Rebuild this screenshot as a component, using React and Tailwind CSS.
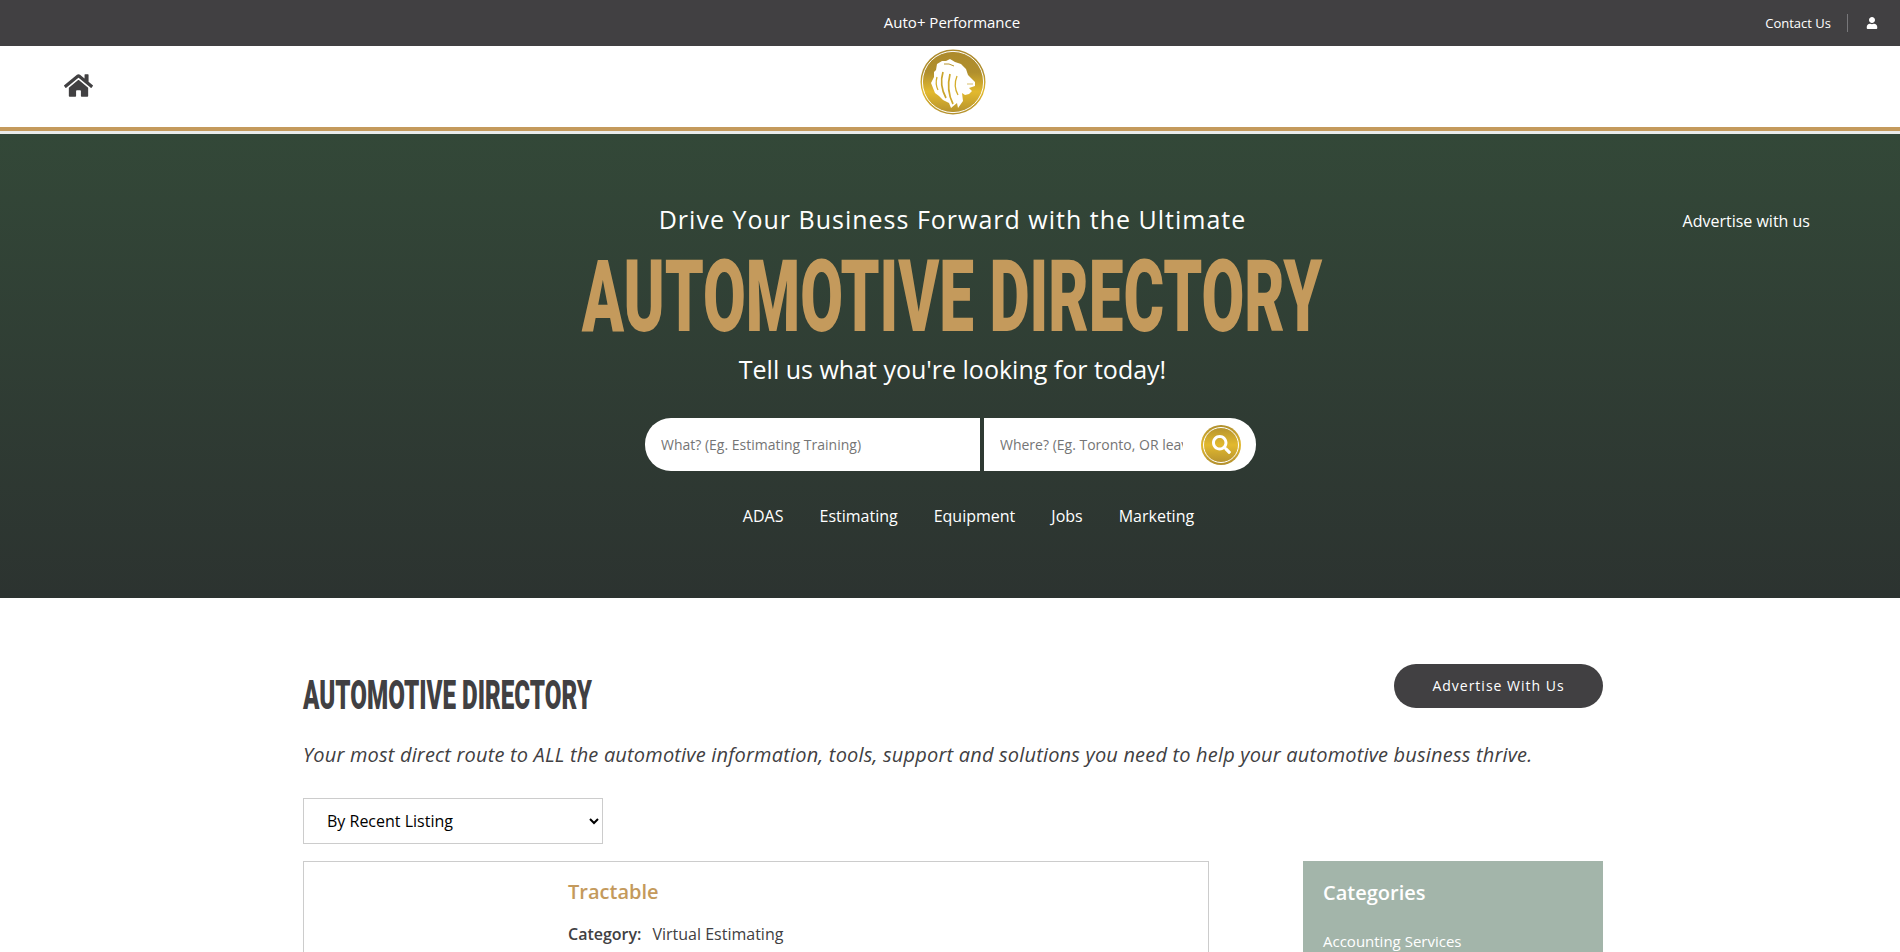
import { FaHome, FaUser, FaSearch } from 'react-icons/fa';

const LionMark = () => (
    <svg viewBox="0 0 66 66" className="w-full h-full">
        <defs>
            <linearGradient id="logo-gold" x1="0" y1="0" x2="0" y2="1">
                <stop offset="0" stopColor="#ad8a2c" />
                <stop offset="0.35" stopColor="#b08f2d" />
                <stop offset="0.65" stopColor="#e2b92e" />
                <stop offset="1" stopColor="#b28f2e" />
            </linearGradient>
        </defs>
        <circle cx="33" cy="33" r="32.5" fill="url(#logo-gold)" />
        <circle cx="33" cy="33" r="30.6" fill="none" stroke="#fff" strokeWidth="1" />
        <path
            d="M17 15 L22 12 L26 12 L30 10 L35 13 L41 15 L46 20 L48 26 L55 33 L55 37 L49 39 L52 42 L49 45 L45 46 L42 44 L43 52 L38 59 L37 54 L31 59 L29 54 L23 51 L19 47 L15 44 L11 34 L14 28 L14 23 L16 21 Z"
            fill="#fff"
        />
        <path d="M23 23 Q19 36 26 49" fill="none" stroke="#c9a42c" strokeWidth="1.7" />
        <path d="M30 25 Q26 41 33 55" fill="none" stroke="#cfa92c" strokeWidth="1.7" />
        <path d="M17 28 Q15 35 18 41" fill="none" stroke="#d4ad2c" strokeWidth="1.3" />
        <path d="M37 27 Q33 37 38 46" fill="none" stroke="#d4ad2c" strokeWidth="1.3" />
        <path d="M24 15 Q29 14 34 17" fill="none" stroke="#b8952c" strokeWidth="1" />
        <path d="M47 35 L53 35" fill="none" stroke="#c9a42c" strokeWidth="0.7" />
    </svg>
);

// Gold search button in the location field
const SearchButton = () => (
    <button
        type="button"
        className="flex h-[40px] w-[40px] items-center justify-center rounded-full bg-gradient-to-b from-[#b08f2d] via-[#e2b92e] to-[#b28f2e] text-white outline outline-1 -outline-offset-[3px] outline-white"
    >
        <FaSearch size={19} />
    </button>
);

const quickLinks = ['ADAS', 'Estimating', 'Equipment', 'Jobs', 'Marketing'];

export default function App() {
    return (
        <div className="h-screen overflow-hidden bg-white text-[#414042] font-['Open_Sans',sans-serif]">
            {/* Top bar */}
            <div className="relative flex h-[46px] items-center justify-center bg-[#414042] text-white">
                <span className="mb-[2px] pl-[4px] text-[15px]">Auto+ Performance</span>
                <div className="absolute right-[22px] top-0 flex h-[46px] items-center">
                    <a className="mt-[2px] text-[13px]">Contact Us</a>
                    <span className="ml-[16px] mr-[18px] h-[18px] w-px bg-[#77777a]" />
                    <FaUser size={12} />
                </div>
            </div>

            {/* Header */}
            <header className="relative flex h-[81px] items-center justify-center bg-white">
                <FaHome size={29} className="absolute left-[64px] top-[25px] text-[#414042]" />
                <div className="mb-[9px] ml-[5px] h-[66px] w-[66px]">
                    <LionMark />
                </div>
            </header>
            <div className="h-[4px] bg-[#c49a5c]" />
            <div className="h-[3px] bg-[#e9ecea]" />

            {/* Hero */}
            <section className="relative flex h-[464px] flex-col items-center bg-gradient-to-b from-[#334838] to-[#2c3330] pl-[5px] text-white">
                <a className="absolute right-[90px] top-[75px] text-[16px]">Advertise with us</a>
                <p className="mt-[69px] text-[25px] leading-[33px] tracking-[1px]">Drive Your Business Forward with the Ultimate</p>
                <h1 className="mt-[10px] flex h-[101px] items-center justify-center whitespace-nowrap font-['Roboto',sans-serif] text-[101px] leading-none font-black text-[#c49a5c] scale-x-[0.614]">
                    AUTOMOTIVE DIRECTORY
                </h1>
                <p className="mt-[5px] text-[25px] leading-[34px]">Tell us what you're looking for today!</p>
                <form className="mr-[4px] mt-[32px] flex h-[53px] w-[611px]">
                    <input
                        placeholder="What? (Eg. Estimating Training)"
                        className="h-full w-[335px] rounded-l-[26px] bg-white pl-[16px] text-[14px] text-[#414042] outline-none placeholder:text-[#757575]"
                    />
                    <div className="ml-[4px] flex h-full flex-1 items-center rounded-r-[26px] bg-white pl-[16px] pr-[15px]">
                        <input
                            placeholder="Where? (Eg. Toronto, OR leave blank)"
                            className="h-full w-[183px] bg-white text-[14px] text-[#414042] outline-none placeholder:text-[#757575]"
                        />
                        <div className="ml-auto">
                            <SearchButton />
                        </div>
                    </div>
                </form>
                <nav className="mt-[33px] flex gap-[36px] pl-[32px] text-[16px] leading-[24px]">
                    {quickLinks.map((link) => (
                        <a key={link}>{link}</a>
                    ))}
                </nav>
            </section>

            {/* Directory */}
            <main className="ml-[303px] w-[1300px] pt-[66px]">
                <div className="flex items-start justify-between">
                    <h2 className="mt-[11px] flex h-[40px] w-[288px] items-center whitespace-nowrap font-['Roboto',sans-serif] text-[41px] leading-none font-black origin-left scale-x-[0.59]">
                        AUTOMOTIVE DIRECTORY
                    </h2>
                    <a className="flex h-[44px] w-[209px] items-center justify-center rounded-full bg-[#414042] pb-[1px] text-[14px] tracking-[1px] text-white">
                        Advertise With Us
                    </a>
                </div>
                <p className="mt-[27px] text-[20px] leading-[26px] tracking-[0.18px] italic">
                    Your most direct route to ALL the automotive information, tools, support and solutions you need to help your automotive business thrive.
                </p>
                <select className="mt-[30px] block h-[46px] w-[300px] border border-[#ccc] bg-white pl-[19px] text-[16px] text-black">
                    <option>By Recent Listing</option>
                </select>
                <div className="mt-[17px] flex items-start justify-between">
                    <article className="h-[200px] w-[906px] border border-[#ccc] pl-[264px] pt-[15px]">
                        <h3 className="text-[20px] leading-[30px] font-semibold text-[#c49a5c]">Tractable</h3>
                        <p className="mt-[15px] text-[16px] leading-[24px]">
                            <span className="font-semibold">Category:</span>
                            <span className="ml-[11px]">Virtual Estimating</span>
                        </p>
                    </article>
                    <aside className="h-[200px] w-[300px] bg-[#a3b5aa] px-[20px] pt-[17px] text-white">
                        <h3 className="text-[20px] leading-[30px] font-semibold">Categories</h3>
                        <p className="mt-[22px] text-[15px] leading-[22px]">Accounting Services</p>
                    </aside>
                </div>
            </main>
        </div>
    );
}
